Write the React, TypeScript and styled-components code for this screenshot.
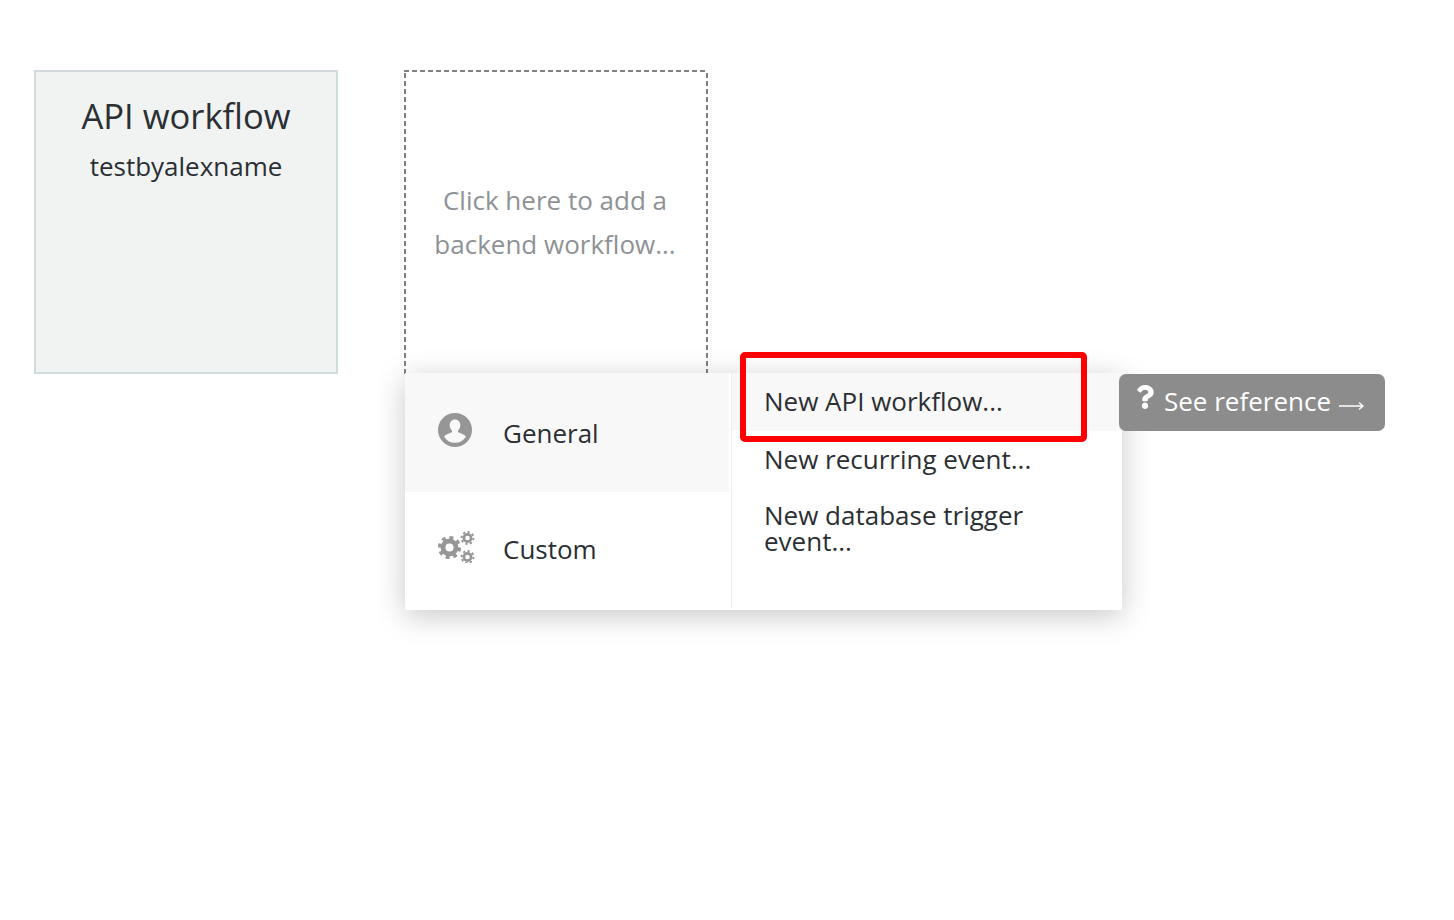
import React from 'react';
import styled, { createGlobalStyle } from 'styled-components';
import { FaQuestion } from 'react-icons/fa';

const GlobalStyle = createGlobalStyle`
  html, body {
    margin: 0;
    padding: 0;
    background: #ffffff;
    font-family: "Open Sans", "Liberation Sans", sans-serif;
    color: #2b2f33;
  }
`;

const UserIcon = () => (
  <svg width="34" height="34" viewBox="0 0 34 34" fill="#969696">
    <path
      fillRule="evenodd"
      d="M17 0a17 17 0 1 0 0 34a17 17 0 1 0 0-34z
         M17 6.5c-3.2 0-5.3 2.6-5.3 5.8 0 2.2.9 4.1 2.3 5.3v1.6c-2.6 1-6 2-8 4.2
         A12.7 12.7 0 0 0 28 23.4c-2-2.2-5.4-3.2-8-4.2v-1.6c1.4-1.2 2.3-3.1 2.3-5.3
         0-3.2-2.1-5.8-5.3-5.8z"
    />
  </svg>
);

const Gear = ({ x, y, ring, teeth }: { x: number; y: number; ring: number; teeth: number }) => (
  <g fill="none" stroke="#969696">
    <circle cx={x} cy={y} r={ring} strokeWidth={ring * 0.75} />
    <circle cx={x} cy={y} r={teeth} strokeWidth={teeth * 0.32} pathLength={16} strokeDasharray="1 1" />
  </g>
);

const CogsIcon = () => (
  <svg width="37" height="33" viewBox="0 -1 37 33">
    <Gear x={11.5} y={16.5} ring={6.5} teeth={10} />
    <Gear x={29.5} y={7} ring={3.6} teeth={6} />
    <Gear x={29.5} y={26} ring={3.6} teeth={6} />
  </svg>
);

const ArrowIcon = () => (
  <svg width="25" height="10" viewBox="0 0 25 10" fill="none" stroke="#ffffff" strokeWidth="1.4">
    <path d="M0 5h24M20 1.5l4 3.5-4 3.5" />
  </svg>
);

const CATEGORIES = [
  { label: 'General', icon: <UserIcon />, active: true },
  { label: 'Custom', icon: <CogsIcon />, active: false },
];

const ACTIONS = [
  { label: 'New API workflow...', active: true },
  { label: 'New recurring event...', active: false },
  { label: 'New database trigger event...', active: false },
];

const App = () => {
  return (
    <Canvas>
      <GlobalStyle />
      <ApiCard>
        <CardTitle>API workflow</CardTitle>
        <CardSubtitle>testbyalexname</CardSubtitle>
      </ApiCard>
      <AddCard>
        Click here to add a
        <br />
        backend workflow...
      </AddCard>

      <Menu>
        <CategoryList>
          {CATEGORIES.map((category) => (
            <CategoryRow key={category.label} $active={category.active}>
              <CategoryIcon>{category.icon}</CategoryIcon>
              {category.label}
            </CategoryRow>
          ))}
        </CategoryList>
        <ActionList>
          {ACTIONS.map((action) => (
            <ActionRow key={action.label} $active={action.active}>
              {action.label}
            </ActionRow>
          ))}
        </ActionList>
      </Menu>

      <Highlight />

      <ReferenceButton>
        <QuestionIcon>
          <FaQuestion />
        </QuestionIcon>
        See reference
        <ArrowSlot>
          <ArrowIcon />
        </ArrowSlot>
      </ReferenceButton>
    </Canvas>
  );
};

const Canvas = styled.div`
  position: relative;
  width: 1454px;
  height: 920px;
  box-sizing: border-box;
  padding: 70px 34px;
  display: flex;
  align-items: flex-start;
  gap: 66px;
  overflow: hidden;
`;

const ApiCard = styled.div`
  width: 304px;
  height: 304px;
  box-sizing: border-box;
  padding-top: 20px;
  background: #f1f3f3;
  border: 2px solid #d0d9dc;
  text-align: center;
`;

const CardTitle = styled.div`
  font-size: 34.6px;
  line-height: 48px;
  color: #2b2f33;
`;

const CardSubtitle = styled.div`
  margin-top: 9px;
  font-size: 26px;
  line-height: 34px;
  color: #2b2f33;
`;

const AddCard = styled.div`
  width: 304px;
  height: 304px;
  box-sizing: border-box;
  padding: 108px 2px 0 0;
  text-align: center;
  font-size: 26px;
  line-height: 44px;
  color: #8e9295;
  background:
    repeating-linear-gradient(90deg, #808080 0 5px, transparent 5px 8px) top / 100% 2px no-repeat,
    repeating-linear-gradient(0deg, #808080 0 5px, transparent 5px 8px) left / 2px 100% no-repeat,
    repeating-linear-gradient(0deg, #808080 0 5px, transparent 5px 8px) right / 2px 100% no-repeat;
`;

const Menu = styled.div`
  position: absolute;
  left: 405px;
  top: 373px;
  width: 717px;
  height: 237px;
  display: flex;
  background: #ffffff;
  border-radius: 2px;
  box-shadow: 0 6px 30px rgba(0, 0, 0, 0.22);
`;

const CategoryList = styled.div`
  width: 326px;
  margin-bottom: 2px;
  border-right: 1px solid #ededed;
  display: flex;
  flex-direction: column;
`;

const CategoryRow = styled.div<{ $active: boolean }>`
  height: ${(p) => (p.$active ? '119px' : '114px')};
  margin-right: 2px;
  display: flex;
  align-items: center;
  padding-left: 33px;
  font-size: 26px;
  color: #2b2f33;
  background: ${(p) => (p.$active ? '#f8f8f8' : '#ffffff')};
`;

const CategoryIcon = styled.span`
  width: 65px;
  display: flex;
  align-items: center;
  transform: translateY(-3px);
`;

const ActionList = styled.div`
  flex: 1;
  display: flex;
  flex-direction: column;
`;

const ActionRow = styled.div<{ $active: boolean }>`
  box-sizing: border-box;
  padding: ${(p) => (p.$active ? '15px 80px 17px 32px' : '15px 80px 15px 32px')};
  font-size: 26px;
  line-height: 26px;
  color: #2b2f33;
  background: ${(p) => (p.$active ? '#f8f8f8' : 'transparent')};
`;

const Highlight = styled.div`
  position: absolute;
  left: 740px;
  top: 352px;
  width: 347px;
  height: 90px;
  box-sizing: border-box;
  border: 6px solid #ff0000;
  border-radius: 5px;
`;

const ReferenceButton = styled.div`
  position: absolute;
  left: 1119px;
  top: 374px;
  width: 266px;
  height: 57px;
  box-sizing: border-box;
  padding: 0 0 4px 14px;
  display: flex;
  align-items: center;
  background: #8c8c8c;
  border-radius: 7px;
  color: #ffffff;
  font-size: 26px;
  white-space: nowrap;
`;

const QuestionIcon = styled.span`
  display: flex;
  margin-right: 7px;
  font-size: 24px;
  transform: translateY(-4px);
`;

const ArrowSlot = styled.span`
  display: flex;
  margin-left: 8px;
  transform: translateY(5px);
`;

export default App;
